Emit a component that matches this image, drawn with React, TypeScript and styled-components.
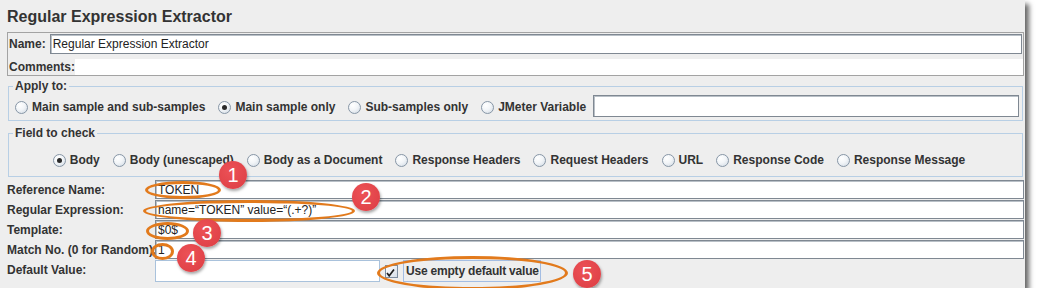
import React from 'react';
import styled, { createGlobalStyle } from 'styled-components';

const GlobalStyle = createGlobalStyle`
	body {
		margin: 0;
		background: #ffffff;
		font-family: 'Liberation Sans', Arial, sans-serif;
	}
`;

const Panel = styled.div`
	position: relative;
	width: 1025px;
	height: 288px;
	box-sizing: border-box;
	background: #eeeeee;
	box-shadow: 4px 4px 5px rgba(0, 0, 0, 0.6);
	display: flex;
	flex-direction: column;
	color: #333;
	font-size: 12px;
`;

const Title = styled.div`
	height: 32px;
	padding: 2px 0 0 7px;
	box-sizing: border-box;
	display: flex;
	align-items: center;
	font-size: 16px;
	font-weight: 700;
	color: #333;
`;

const NameBox = styled.div`
	margin-left: 7px;
	width: 1017px;
	height: 44px;
	box-sizing: border-box;
	border: 1px solid #a3a3a3;
	display: flex;
	flex-direction: column;
	gap: 5px;
	padding-top: 1px;
`;

const NameRow = styled.div`
	display: flex;
	align-items: center;
	height: 20px;
	padding-left: 1px;
	gap: 4px;
`;

const CommentsRow = styled.div`
	display: flex;
	align-items: center;
	height: 16px;
	padding-left: 1px;
`;

const BoldLabel = styled.span`
	font-weight: 700;
	white-space: nowrap;
`;

const TextBox = styled.div<{ $height?: number; $light?: boolean; $width?: number }>`
	box-sizing: border-box;
	height: ${(p) => p.$height ?? 19}px;
	${(p) => (p.$width ? `width: ${p.$width}px;` : 'flex: 1;')}
	background: #ffffff;
	border: 1px solid ${(p) => (p.$light ? '#a9c2dc' : '#7f8892')};
	box-shadow: ${(p) => (p.$light ? 'none' : 'inset 1px 1px 0 #b9c0c7')};
	display: flex;
	align-items: center;
	padding-left: 2px;
	font-size: 12px;
	color: #222;
	white-space: nowrap;
`;

const NameInput = styled(TextBox)`
	margin-right: 1px;
`;

const CommentsField = styled.div`
	flex: 1;
	height: 16px;
	background: #ffffff;
`;

const Group = styled.fieldset<{ $top: number }>`
	margin: ${(p) => p.$top}px 0 0 8px;
	width: 1015px;
	box-sizing: border-box;
	border: 1px solid #b8cfe5;
	padding: 0;
	min-width: 0;
`;

const Legend = styled.legend`
	margin-left: 4px;
	padding: 0 2px;
	font-weight: 700;
	font-size: 12px;
	line-height: 14px;
	color: #333;
`;

const ApplyRow = styled.div`
	display: flex;
	align-items: center;
	padding: 2px 3px 3px 6px;
`;

const ApplyOptions = styled.div`
	display: flex;
	align-items: center;
	padding-top: 2px;
	margin-right: -6px;
`;

const FieldRow = styled.div`
	display: flex;
	align-items: center;
	justify-content: center;
	height: 20px;
	padding: 10px 0 6px;
`;

const Option = styled.label`
	display: flex;
	align-items: center;
	gap: 4px;
	margin-right: 13px;
	font-weight: 700;
	white-space: nowrap;
`;

const RadioCircle = styled.span<{ $checked?: boolean }>`
	width: 13px;
	height: 13px;
	box-sizing: border-box;
	border-radius: 50%;
	border: 1px solid #8796a6;
	background: radial-gradient(circle at 35% 30%, #ffffff 0%, #f2f5f8 45%, #cfd8e2 100%);
	display: flex;
	align-items: center;
	justify-content: center;

	&::after {
		content: '';
		width: 5px;
		height: 5px;
		border-radius: 50%;
		background: ${(p) => (p.$checked ? '#2a2a2a' : 'transparent')};
	}
`;

const FormGrid = styled.div`
	margin-top: 3px;
	display: grid;
	grid-template-columns: 148px 869px;
	row-gap: 1px;
	padding-left: 7px;
`;

const RowLabel = styled.div`
	display: flex;
	align-items: center;
	font-weight: 700;
	white-space: nowrap;
	height: 19px;
`;

const DefaultRow = styled.div`
	display: flex;
	align-items: center;
	gap: 3px;
`;

const CheckBox = styled.span`
	width: 13px;
	height: 13px;
	box-sizing: border-box;
	border: 1px solid #7d8da0;
	background: linear-gradient(135deg, #ffffff, #d6dee8);
	display: flex;
	align-items: flex-end;
	justify-content: flex-start;
	margin-left: 2px;
`;

const CheckLabel = styled.span`
	margin-left: 2px;
	padding: 3px 1px 3px 2px;
	border: 1px solid #a3bde3;
	font-weight: 700;
	font-size: 12px;
	letter-spacing: -0.2px;
	white-space: nowrap;
`;

const Oval = styled.div<{ $x: number; $y: number; $w: number; $h: number }>`
	position: absolute;
	left: ${(p) => p.$x}px;
	top: ${(p) => p.$y}px;
	width: ${(p) => p.$w}px;
	height: ${(p) => p.$h}px;
	box-sizing: border-box;
	border: 3px solid #e27a1c;
	border-radius: 50%;
	pointer-events: none;
`;

const Badge = styled.div<{ $cx: number; $cy: number }>`
	position: absolute;
	left: ${(p) => p.$cx - 14}px;
	top: ${(p) => p.$cy - 14}px;
	width: 28px;
	height: 28px;
	border-radius: 50%;
	background: radial-gradient(circle at 40% 35%, #ec5156, #dc3d43);
	box-shadow: 1px 2px 3px rgba(0, 0, 0, 0.35);
	color: #ffffff;
	font-size: 20px;
	display: flex;
	align-items: center;
	justify-content: center;
`;

const applyOptions = [
	{ label: 'Main sample and sub-samples', checked: false },
	{ label: 'Main sample only', checked: true },
	{ label: 'Sub-samples only', checked: false },
	{ label: 'JMeter Variable', checked: false },
];

const fieldOptions = [
	{ label: 'Body', checked: true },
	{ label: 'Body (unescaped)', checked: false },
	{ label: 'Body as a Document', checked: false },
	{ label: 'Response Headers', checked: false },
	{ label: 'Request Headers', checked: false },
	{ label: 'URL', checked: false },
	{ label: 'Response Code', checked: false },
	{ label: 'Response Message', checked: false },
];

const fields = [
	{ label: 'Reference Name:', value: 'TOKEN' },
	{ label: 'Regular Expression:', value: 'name=\u201CTOKEN\u201D value=\u201C(.+?)\u201D' },
	{ label: 'Template:', value: '$0$' },
	{ label: 'Match No. (0 for Random):', value: '1' },
];

const ovals = [
	{ x: 145, y: 181, w: 76, h: 18 },
	{ x: 143, y: 200, w: 212, h: 22 },
	{ x: 146, y: 222, w: 43, h: 18 },
	{ x: 151, y: 243, w: 23, h: 17 },
	{ x: 377, y: 256, w: 191, h: 34 },
];

const badges = [
	{ n: 1, cx: 233, cy: 175 },
	{ n: 2, cx: 366, cy: 197 },
	{ n: 3, cx: 207, cy: 233 },
	{ n: 4, cx: 191, cy: 258 },
	{ n: 5, cx: 587, cy: 274 },
];

export default function App() {
	return (
		<>
			<GlobalStyle />
			<Panel>
				<Title>Regular Expression Extractor</Title>
				<NameBox>
					<NameRow>
						<BoldLabel>Name:</BoldLabel>
						<NameInput $height={20}>Regular Expression Extractor</NameInput>
					</NameRow>
					<CommentsRow>
						<BoldLabel>Comments:</BoldLabel>
						<CommentsField />
					</CommentsRow>
				</NameBox>

				<Group $top={3}>
					<Legend>Apply to:</Legend>
					<ApplyRow>
						<ApplyOptions>
							{applyOptions.map((o) => (
								<Option key={o.label}>
									<RadioCircle $checked={o.checked} />
									{o.label}
								</Option>
							))}
						</ApplyOptions>
						<TextBox $height={22} />
					</ApplyRow>
				</Group>

				<Group $top={5}>
					<Legend>Field to check</Legend>
					<FieldRow>
						{fieldOptions.map((o) => (
							<Option key={o.label}>
								<RadioCircle $checked={o.checked} />
								{o.label}
							</Option>
						))}
					</FieldRow>
				</Group>

				<FormGrid>
					{fields.map((f) => (
						<React.Fragment key={f.label}>
							<RowLabel>{f.label}</RowLabel>
							<TextBox>{f.value}</TextBox>
						</React.Fragment>
					))}
					<RowLabel>Default Value:</RowLabel>
					<DefaultRow>
						<TextBox $light $height={22} $width={225} />
						<CheckBox>
							<svg width='9' height='9' viewBox='0 0 9 9'>
								<path d='M1 5 L3.2 7.8 L8 1.5' stroke='#1e1e1e' strokeWidth='1.7' fill='none' />
							</svg>
						</CheckBox>
						<CheckLabel>Use empty default value</CheckLabel>
					</DefaultRow>
				</FormGrid>

				{ovals.map((o, i) => (
					<Oval key={i} $x={o.x} $y={o.y} $w={o.w} $h={o.h} />
				))}
				{badges.map((b) => (
					<Badge key={b.n} $cx={b.cx} $cy={b.cy}>
						{b.n}
					</Badge>
				))}
			</Panel>
		</>
	);
}
